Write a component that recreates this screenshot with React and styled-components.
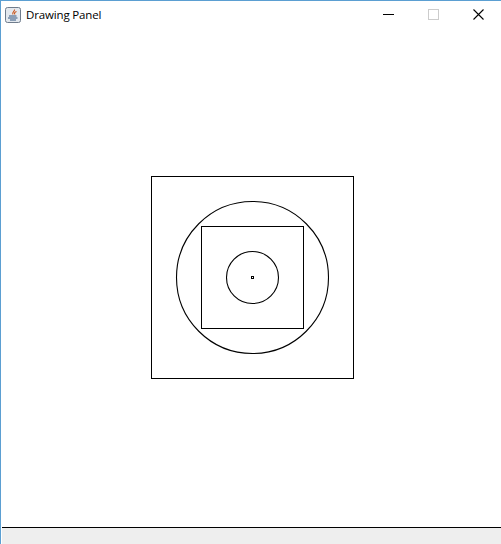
import React from 'react'
import styled, { createGlobalStyle } from 'styled-components'

const GlobalStyle = createGlobalStyle`
  html, body {
    margin: 0;
    padding: 0;
    background: #ffffff;
  }
`

const Window = styled.div`
  box-sizing: border-box;
  width: 501px;
  height: 544px;
  display: flex;
  flex-direction: column;
  overflow: hidden;
  background: #ffffff;
  border-top: 1px solid #5b9fd2;
  border-left: 1px solid #5b9fd2;
`

const TitleBar = styled.div`
  height: 27px;
  flex: none;
  display: flex;
  align-items: center;
  padding-left: 4px;
`

const AppIcon = styled.svg`
  width: 16px;
  height: 16px;
  flex: none;
`

const Title = styled.span`
  margin-left: 5px;
  font-family: "Open Sans", "Noto Sans", sans-serif;
  font-size: 11.5px;
  letter-spacing: -0.15px;
  color: #000000;
  white-space: nowrap;
`

const Controls = styled.div`
  margin-left: auto;
  display: flex;
  align-items: center;
`

const ControlButton = styled.div`
  width: 45px;
  height: 27px;
  display: flex;
  align-items: center;
  justify-content: center;
`

const Glyph = styled.svg`
  width: 11px;
  height: 11px;
  display: block;
`

const Canvas = styled.div`
  flex: 1;
  min-height: 0;
  margin-left: 1px;
`

const Drawing = styled.svg`
  width: 499px;
  height: 499px;
  display: block;
`

const StatusBar = styled.div`
  height: 16px;
  flex: none;
  margin-left: 1px;
  border-top: 1px solid #000000;
  background: #eeeeee;
`

const DrawingPanel = () => (
  <Drawing viewBox="2 28 499 499" fill="none" stroke="#000000" strokeWidth="1">
    <rect x="151.5" y="176.5" width="202" height="202" />
    <circle cx="252.5" cy="277.5" r="76" strokeWidth="1.1" />
    <rect x="201.5" y="226.5" width="102" height="102" />
    <circle cx="252.5" cy="277.5" r="26" strokeWidth="1.1" />
    <rect x="251.5" y="276.5" width="2" height="2" />
  </Drawing>
)

const App = () => (
  <Window>
    <GlobalStyle />
    <TitleBar>
      <AppIcon viewBox="0 0 16 16">
        <rect x="0.5" y="0.5" width="15" height="15" rx="2" fill="#e3e8ee" stroke="#6f7c8c" />
        <path d="M9.500 2.500c.8 1.500-3 2.500-1.500 5M11.500 4.500c-2 .8-2.500 1.800-1.500 3" fill="none" stroke="#c9541a" strokeWidth="1.100" />
        <path d="M4 9h7.500M3 11h9.500M5 13h6" fill="none" stroke="#33557f" strokeWidth="1" />
      </AppIcon>
      <Title>Drawing Panel</Title>
      <Controls>
        <ControlButton>
          <Glyph viewBox="0 0 11 11">
            <path d="M0 5.500h11" stroke="#000000" strokeWidth="1" />
          </Glyph>
        </ControlButton>
        <ControlButton>
          <Glyph viewBox="0 0 11 11">
            <rect x="0.500" y="0.500" width="10" height="10" fill="none" stroke="#cccccc" />
          </Glyph>
        </ControlButton>
        <ControlButton>
          <Glyph viewBox="0 0 11 11">
            <path d="M0.500 0.500l10 10M10.500 0.500l-10 10" stroke="#000000" strokeWidth="1.100" />
          </Glyph>
        </ControlButton>
      </Controls>
    </TitleBar>
    <Canvas>
      <DrawingPanel />
    </Canvas>
    <StatusBar />
  </Window>
)

export default App
